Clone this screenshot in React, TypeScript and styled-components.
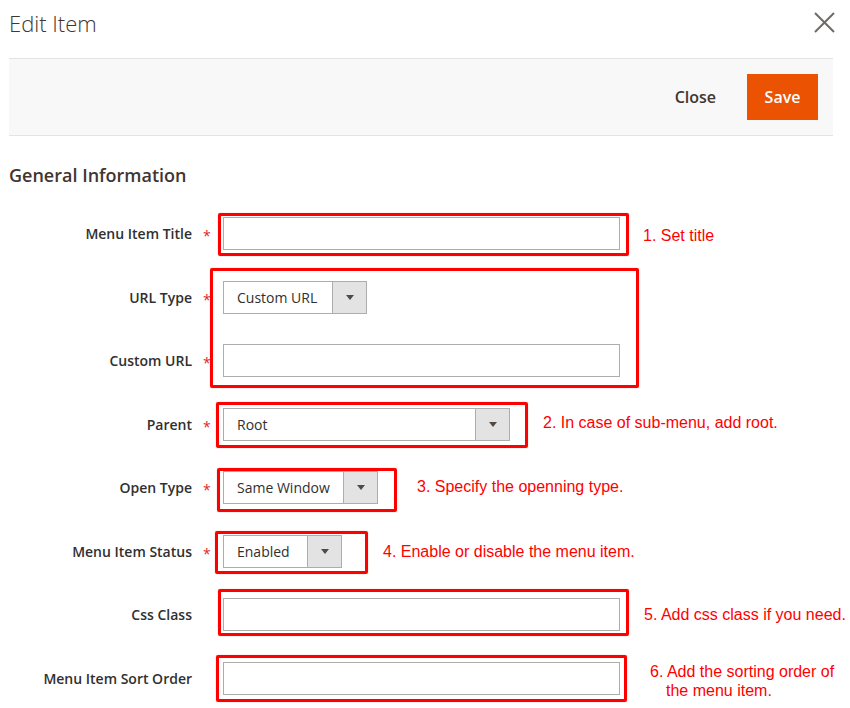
import React from 'react';
import styled, { createGlobalStyle } from 'styled-components';

const GlobalStyle = createGlobalStyle`
  html, body { margin: 0; padding: 0; background: #fff; }
  body { font-family: "Open Sans", "Liberation Sans", sans-serif; color: #303030; }
  * { box-sizing: border-box; }
`;

const Page = styled.div`
  position: relative;
  width: 850px;
  height: 708px;
  overflow: hidden;
  padding: 0 17px 0 9px;
`;

const Header = styled.header`
  height: 58px;
  display: flex;
  align-items: flex-start;
  justify-content: space-between;
`;

const Title = styled.h1`
  margin: 0;
  padding-top: 8px;
  font-size: 22px;
  line-height: 30px;
  font-weight: 300;
  color: #41362f;
`;

const CloseIcon = styled.button`
  margin: 12px -2px 0 0;
  padding: 0;
  width: 21px;
  height: 21px;
  border: 0;
  background: none;
  display: flex;
  align-items: center;
  justify-content: center;
`;

const Toolbar = styled.div`
  height: 78px;
  background: #f8f8f8;
  border-top: 1px solid #e3e3e3;
  border-bottom: 1px solid #e3e3e3;
  display: flex;
  align-items: center;
  justify-content: flex-end;
  padding-right: 15px;
  gap: 16px;
`;

const TextButton = styled.button`
  border: 0;
  background: none;
  font-family: inherit;
  font-size: 16px;
  font-weight: 600;
  color: #41362f;
  padding: 0 15px;
  height: 46px;
`;

const PrimaryButton = styled.button`
  border: 0;
  background: #eb5202;
  color: #fff;
  font-family: inherit;
  font-size: 16px;
  font-weight: 600;
  width: 71px;
  height: 46px;
  padding: 0;
`;

const SectionTitle = styled.h2`
  margin: 27px 0 0;
  font-size: 18px;
  line-height: 24px;
  font-weight: 600;
  color: #41362f;
`;

const Form = styled.div`
  margin-top: 30px;
  display: grid;
  grid-auto-rows: 33px;
  row-gap: 30.57px;
`;

const Row = styled.div`
  display: grid;
  grid-template-columns: 183px 31px 1fr;
  align-items: center;
`;

const Label = styled.label`
  text-align: right;
  font-size: 14px;
  font-weight: 600;
  color: #303030;
`;

const Required = styled.span`
  padding-left: 11px;
  padding-top: 4px;
  color: #e22626;
  font-size: 14px;
`;

const TextInput = styled.div`
  width: 397px;
  height: 33px;
  border: 1px solid #adadad;
  background: #fff;
`;

const Select = styled.div<{ $w: number }>`
  width: ${(p) => p.$w}px;
  height: 33px;
  border: 1px solid #adadad;
  background: #fff;
  display: flex;
`;

const SelectValue = styled.span`
  flex: 1;
  padding-left: 13px;
  font-size: 14px;
  line-height: 31px;
  color: #303030;
  white-space: nowrap;
`;

const SelectArrow = styled.span`
  width: 34px;
  border-left: 1px solid #adadad;
  background: #e3e3e3;
  display: flex;
  align-items: center;
  justify-content: center;
  &::after {
    content: '';
    border-top: 5px solid #514943;
    border-left: 4px solid transparent;
    border-right: 4px solid transparent;
  }
`;

const NoteBox = styled.div`
  position: absolute;
  border: 3px solid #ff0000;
  border-radius: 2px;
  box-shadow: 0 0 1px rgba(255, 0, 0, 0.6);
  pointer-events: none;
`;

const NoteText = styled.div`
  position: absolute;
  font-family: "Liberation Sans", Arial, sans-serif;
  font-size: 16px;
  line-height: 19px;
  color: #ff0000;
  white-space: nowrap;
`;

const NoteIndent = styled.span`
  display: block;
  padding-left: 16px;
`;

type Field = { kind: 'input' } | { kind: 'select'; value: string; width: number };
type FormRow = { label: string; required: boolean; field: Field };

const rows: FormRow[] = [
  { label: 'Menu Item Title', required: true, field: { kind: 'input' } },
  { label: 'URL Type', required: true, field: { kind: 'select', value: 'Custom URL', width: 144 } },
  { label: 'Custom URL', required: true, field: { kind: 'input' } },
  { label: 'Parent', required: true, field: { kind: 'select', value: 'Root', width: 287 } },
  { label: 'Open Type', required: true, field: { kind: 'select', value: 'Same Window', width: 155 } },
  { label: 'Menu Item Status', required: true, field: { kind: 'select', value: 'Enabled', width: 119 } },
  { label: 'Css Class', required: false, field: { kind: 'input' } },
  { label: 'Menu Item Sort Order', required: false, field: { kind: 'input' } },
];

const boxes = [
  { l: 218, t: 213, w: 411, h: 43 },
  { l: 210, t: 268, w: 429, h: 120 },
  { l: 216, t: 402, w: 312, h: 46 },
  { l: 217, t: 468, w: 180, h: 44 },
  { l: 215, t: 531, w: 153, h: 43 },
  { l: 218, t: 589, w: 411, h: 47 },
  { l: 216, t: 655, w: 411, h: 47 },
];

const notes: { l: number; t: number; lines: string[] }[] = [
  { l: 643, t: 226, lines: ['1. Set title'] },
  { l: 543, t: 413, lines: ['2. In case of sub-menu, add root.'] },
  { l: 417, t: 477, lines: ['3. Specify the openning type.'] },
  { l: 383, t: 542, lines: ['4. Enable or disable the menu item.'] },
  { l: 644, t: 605, lines: ['5. Add css class if you need.'] },
  { l: 650, t: 662, lines: ['6. Add the sorting order of', 'the menu item.'] },
];

export default function App() {
  return (
    <Page>
      <GlobalStyle />
      <Header>
        <Title>Edit Item</Title>
        <CloseIcon aria-label="Close">
          <svg width="21" height="21" viewBox="0 0 21 21">
            <path d="M1 1 L20 20 M20 1 L1 20" stroke="#736963" strokeWidth="2" fill="none" />
          </svg>
        </CloseIcon>
      </Header>
      <Toolbar>
        <TextButton>Close</TextButton>
        <PrimaryButton>Save</PrimaryButton>
      </Toolbar>
      <SectionTitle>General Information</SectionTitle>
      <Form>
        {rows.map((r) => (
          <Row key={r.label}>
            <Label>{r.label}</Label>
            <Required>{r.required ? '*' : ''}</Required>
            {r.field.kind === 'input' ? (
              <TextInput />
            ) : (
              <Select $w={r.field.width}>
                <SelectValue>{r.field.value}</SelectValue>
                <SelectArrow />
              </Select>
            )}
          </Row>
        ))}
      </Form>
      {boxes.map((b, i) => (
        <NoteBox key={i} style={{ left: b.l, top: b.t, width: b.w, height: b.h }} />
      ))}
      {notes.map((n, i) => (
        <NoteText key={i} style={{ left: n.l, top: n.t }}>
          {n.lines.map((line, j) => (j === 0 ? <span key={j}>{line}</span> : <NoteIndent key={j}>{line}</NoteIndent>))}
        </NoteText>
      ))}
    </Page>
  );
}
